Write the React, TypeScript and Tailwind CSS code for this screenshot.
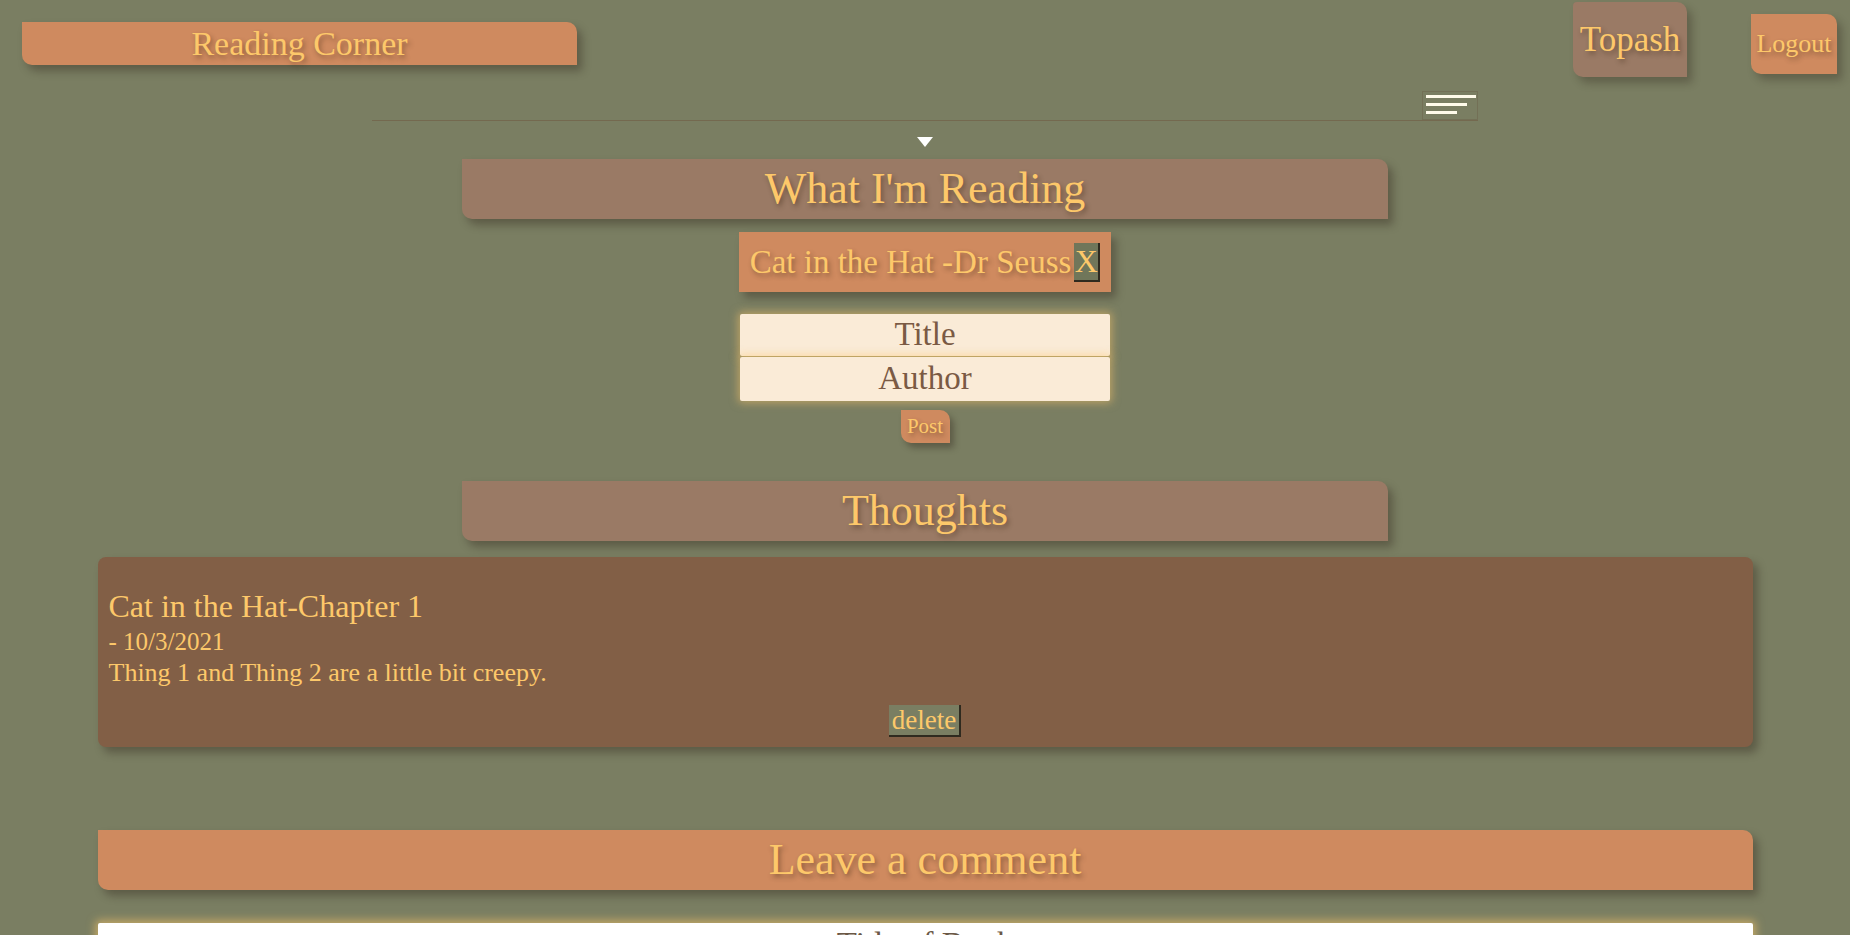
import React from "react";

const shade = "[text-shadow:2px_3px_5px_rgba(60,40,20,0.45)]";

const Heading = ({ title, wide, orange }: { title: string; wide?: boolean; orange?: boolean }) => (
  <div
    className={`mx-auto flex h-[60px] items-center justify-center rounded-tr-[10px] rounded-bl-[10px] shadow-[5px_6px_8px_rgba(40,30,20,0.35)] ${
      wide ? "w-[1655px]" : "w-[926px]"
    } ${orange ? "bg-[#cf8a5f]" : "bg-[#9a7a65]"}`}
  >
    <h2 className={`text-[44px] leading-none ${shade}`}>{title}</h2>
  </div>
);

const Hamburger = () => (
  <div className="flex h-[29px] w-[56px] flex-col items-start gap-[5px] border border-[#737056] px-[3px] pt-[3px]">
    <span className="block h-[3px] w-[50px] bg-[#fffbea]" />
    <span className="block h-[3px] w-[41px] bg-[#fffbea]" />
    <span className="block h-[3px] w-[31px] bg-[#fffbea]" />
  </div>
);

export default function App() {
  return (
    <div className="min-h-screen bg-[#7a7e62] pb-10 font-['Liberation_Serif','DejaVu_Serif',serif] text-[#fdc86a]">
      <header className="flex items-start justify-between">
        <div className="ml-[22px] mt-[22px] flex h-[43px] w-[555px] items-center justify-center rounded-tr-[10px] rounded-bl-[10px] bg-[#cf8a5f] shadow-[5px_6px_8px_rgba(40,30,20,0.35)]">
          <span className={`text-[34px] leading-none ${shade}`}>Reading Corner</span>
        </div>
        <div className="mr-[13px] flex items-start">
          <div className="mt-[2px] flex h-[75px] w-[114px] items-center justify-center rounded-tl-[4px] rounded-tr-[10px] rounded-bl-[10px] bg-[#9a7a65] shadow-[5px_6px_8px_rgba(40,30,20,0.3)]">
            <span className={`text-[35px] leading-none ${shade}`}>Topash</span>
          </div>
          <div className="ml-[64px] mt-[14px] flex h-[60px] w-[86px] items-center justify-center rounded-tr-[10px] rounded-bl-[10px] bg-[#cf8a5f] shadow-[5px_6px_8px_rgba(40,30,20,0.3)]">
            <span className={`text-[26px] leading-none ${shade}`}>Logout</span>
          </div>
        </div>
      </header>

      <nav className="mx-auto mt-[14px] flex w-[1106px] justify-end border-b border-[#74694f]">
        <Hamburger />
      </nav>

      <div className="mt-[16px] flex justify-center">
        <svg width="16" height="10" viewBox="0 0 16 10">
          <path d="M0 0 L16 0 L8 10 Z" fill="#ffffff" />
        </svg>
      </div>

      <section className="mt-[12px]">
        <Heading title="What I'm Reading" />

        <div className="mt-[13px] flex justify-center">
          <div className="flex h-[60px] items-center bg-[#cf8a5f] px-[11px] shadow-[5px_6px_8px_rgba(40,30,20,0.35)]">
            <span className={`text-[33px] leading-none ${shade}`}>Cat in the Hat -Dr Seuss</span>
            <button className="ml-[3px] flex h-[39px] w-[26px] items-center justify-center border-r-2 border-b-2 border-[#2f2a1f] bg-[#70765a] text-[32px] leading-none text-[#fdc86a]">
              X
            </button>
          </div>
        </div>

        <form className="mx-auto mt-[22px] flex w-[370px] flex-col">
          <input
            placeholder="Title"
            className="h-[42px] w-full rounded-[2px] bg-[#faebd7] text-center text-[33px] text-[#7a5a44] shadow-[0_0_8px_2px_rgba(253,200,106,0.5)] outline-none placeholder:text-[#7a5a44]"
          />
          <input
            placeholder="Author"
            className="mt-[1px] h-[44px] w-full rounded-[2px] bg-[#faebd7] text-center text-[33px] text-[#7a5a44] shadow-[0_0_8px_2px_rgba(253,200,106,0.5)] outline-none placeholder:text-[#7a5a44]"
          />
          <div className="mt-[9px] flex justify-center">
            <button
              type="button"
              className={`h-[33px] w-[49px] rounded-tr-[10px] rounded-bl-[10px] bg-[#cf8a5f] text-[21px] leading-none text-[#fdc86a] shadow-[4px_5px_6px_rgba(40,30,20,0.35)] ${shade}`}
            >
              Post
            </button>
          </div>
        </form>
      </section>

      <section className="mt-[38px]">
        <Heading title="Thoughts" />

        <div className="mx-auto mt-[16px] w-[1655px] rounded-lg bg-[#825f46] px-[11px] pt-[32px] pb-[10px] shadow-[5px_6px_8px_rgba(40,30,20,0.35)]">
          <h3 className="text-[32px] leading-[34px]">Cat in the Hat-Chapter 1</h3>
          <p className="mt-[4px] text-[25px] leading-[30px]">- 10/3/2021</p>
          <p className="mt-[1px] text-[26px] leading-[30px]">Thing 1 and Thing 2 are a little bit creepy.</p>
          <div className="mt-[17px] flex justify-center">
            <button className="h-[32px] w-[72px] border-r-2 border-b-2 border-[#2f2a1f] bg-[#7a7e62] text-[27px] leading-none text-[#fdc86a]">
              delete
            </button>
          </div>
        </div>
      </section>

      <section className="mt-[83px]">
        <Heading title="Leave a comment" wide orange />
        <div className="mx-auto mt-[33px] w-[1655px]">
          <input
            placeholder="Title of Book"
            className="h-[44px] w-full rounded-[2px] bg-white text-center text-[33px] text-[#6b5846] shadow-[0_0_8px_3px_rgba(253,200,106,0.55)] outline-none placeholder:text-[#6b5846]"
          />
        </div>
      </section>
    </div>
  );
}
